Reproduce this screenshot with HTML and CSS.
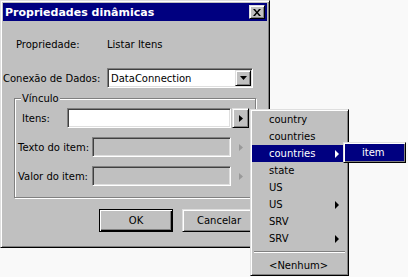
FILE: index.html
```html
<!DOCTYPE html>
<html lang="pt">
<head>
	<title>Propriedades dinâmicas</title>
	<meta charset="utf-8">
	<link rel="stylesheet" href="styles.css">
</head>
<body>
	<div class="window">
		<div class="titlebar">
			<span class="title">Propriedades dinâmicas</span>
			<button class="close">
				<svg width="8" height="7" viewBox="0 0 8 7"><path d="M0 0h2l2 2.5L6 0h2L5 3.5 8 7H6L4 4.5 2 7H0l3-3.5z" fill="#000"/></svg>
			</button>
		</div>

		<div class="row prop">
			<span class="label">Propriedade:</span>
			<span>Listar Itens</span>
		</div>

		<div class="row conn">
			<span class="label">Conexão de Dados:</span>
			<div class="select">
				<span>DataConnection</span>
				<span class="drop">
					<svg width="7" height="4" viewBox="0 0 7 4"><path d="M0 0h7L3.5 4z" fill="#000"/></svg>
				</span>
			</div>
		</div>

		<div class="group">
			<span class="legend">Vínculo</span>
			<div class="field items">
				<span class="label">Itens:</span>
				<div class="input"></div>
				<span class="more">
					<svg width="4" height="7" viewBox="0 0 4 7"><path d="M0 0v7l4-3.5z" fill="#000"/></svg>
				</span>
			</div>
			<div class="field">
				<span class="label">Texto do item:</span>
				<div class="input off"></div>
				<span class="more off">
					<svg width="4" height="7" viewBox="0 0 4 7"><path d="M0 0v7l4-3.5z" fill="#999"/></svg>
				</span>
			</div>
			<div class="field">
				<span class="label">Valor do item:</span>
				<div class="input off"></div>
				<span class="more off">
					<svg width="4" height="7" viewBox="0 0 4 7"><path d="M0 0v7l4-3.5z" fill="#999"/></svg>
				</span>
			</div>
		</div>

		<div class="actions">
			<button class="btn default">OK</button>
			<button class="btn">Cancelar</button>
		</div>
	</div>

	<div class="menu main-menu">
		<div class="item">country</div>
		<div class="item">countries</div>
		<div class="item active sub">countries</div>
		<div class="item">state</div>
		<div class="item">US</div>
		<div class="item sub">US</div>
		<div class="item">SRV</div>
		<div class="item sub">SRV</div>
		<div class="sep"></div>
		<div class="item">&lt;Nenhum&gt;</div>
	</div>

	<div class="menu sub-menu">
		<div class="item active">item</div>
	</div>
</body>
</html>
```

FILE: styles.css
```css
body {
	margin: 0;
	padding: 0;
	background: #f9f9f9;
	font-family: "DejaVu Sans", sans-serif;
	font-size: 10px;
	color: #000;
}
.window {
	box-sizing: border-box;
	width: 270px;
	height: 248px;
	padding: 2px;
	background: #c0c0c0;
	border: 1px solid;
	border-color: #dfdfdf #000 #000 #dfdfdf;
	box-shadow: inset 1px 1px #fff, inset -1px -1px #808080;
}
.titlebar {
	display: flex;
	align-items: center;
	justify-content: space-between;
	height: 18px;
	padding: 0 2px 0 2px;
	background: #000080;
	color: #fff;
	font-weight: bold;
	font-size: 11px;
}
.close {
	display: flex;
	align-items: center;
	justify-content: center;
	box-sizing: border-box;
	width: 16px;
	height: 14px;
	padding: 0;
	background: #c0c0c0;
	border: 1px solid;
	border-color: #dfdfdf #000 #000 #dfdfdf;
	box-shadow: inset 1px 1px #fff, inset -1px -1px #808080;
}
.row {
	display: grid;
	grid-template-columns: 104px 1fr;
	align-items: center;
	height: 20px;
}
.prop {
	margin-top: 13px;
}
.prop .label {
	padding-left: 13px;
}
.conn {
	margin-top: 14px;
}
.select {
	display: flex;
	align-items: center;
	justify-content: space-between;
	box-sizing: border-box;
	width: 146px;
	height: 20px;
	padding: 1px 1px 1px 3px;
	background: #fff;
	border: 1px solid;
	border-color: #808080 #fff #fff #808080;
	box-shadow: inset 1px 1px #404040, inset -1px -1px #dfdfdf;
}
.drop {
	display: flex;
	align-items: center;
	justify-content: center;
	box-sizing: border-box;
	width: 16px;
	height: 16px;
	background: #c0c0c0;
	border: 1px solid;
	border-color: #dfdfdf #000 #000 #dfdfdf;
	box-shadow: inset 1px 1px #fff, inset -1px -1px #808080;
}
.group {
	box-sizing: border-box;
	height: 100px;
	margin: 10px 11px 0 11px;
	border: 1px solid #808080;
	box-shadow: inset 1px 1px #fff, 1px 1px #fff;
}
.legend {
	display: block;
	width: fit-content;
	margin: -7px 0 0 6px;
	padding: 0 1px;
	line-height: 13px;
	background: #c0c0c0;
}
.field {
	display: flex;
	align-items: center;
	height: 20px;
	margin-top: 9px;
}
.field .label {
	box-sizing: border-box;
	width: 77px;
	padding-left: 3px;
}
.items {
	margin-top: 3px;
}
.items .label {
	width: 52px;
	padding-left: 7px;
}
.input {
	box-sizing: border-box;
	width: 164px;
	height: 20px;
	background: #fff;
	border: 1px solid;
	border-color: #808080 #fff #fff #808080;
	box-shadow: inset 1px 1px #404040, inset -1px -1px #dfdfdf;
}
.field .input.off {
	width: 139px;
	background: #c0c0c0;
}
.more {
	display: flex;
	align-items: center;
	justify-content: center;
	box-sizing: border-box;
	width: 17px;
	height: 20px;
	margin-left: 1px;
	background: #c0c0c0;
	border: 1px solid;
	border-color: #dfdfdf #000 #000 #dfdfdf;
	box-shadow: inset 1px 1px #fff, inset -1px -1px #808080;
}
.more.off {
	border-color: transparent;
	box-shadow: none;
}
.actions {
	display: flex;
	gap: 9px;
	margin-top: 11px;
	padding-left: 96px;
}
.btn {
	box-sizing: border-box;
	width: 74px;
	height: 23px;
	padding: 0;
	font: inherit;
	color: #000;
	background: #c0c0c0;
	border: 1px solid;
	border-color: #dfdfdf #000 #000 #dfdfdf;
	box-shadow: inset 1px 1px #fff, inset -1px -1px #808080;
}
.btn.default {
	border-color: #000;
	box-shadow: inset 1px 1px #fff, inset -1px -1px #000, inset -2px -2px #808080;
}
.menu {
	position: absolute;
	box-sizing: border-box;
	padding: 1px;
	background: #c0c0c0;
	border: 1px solid;
	border-color: #dfdfdf #000 #000 #dfdfdf;
	box-shadow: inset 1px 1px #fff, inset -1px -1px #808080;
}
.main-menu {
	left: 250px;
	top: 109px;
	width: 99px;
}
.sub-menu {
	left: 343px;
	top: 142px;
	width: 63px;
}
.item {
	position: relative;
	height: 17px;
	line-height: 17px;
	padding-left: 17px;
	white-space: nowrap;
}
.item.active {
	background: #000080;
	color: #fff;
}
.item.sub::after {
	content: "";
	position: absolute;
	right: 8px;
	top: 5px;
	border-left: 4px solid currentColor;
	border-top: 4px solid transparent;
	border-bottom: 4px solid transparent;
}
.sep {
	height: 0;
	margin: 4px 2px;
	border-top: 1px solid #808080;
	border-bottom: 1px solid #fff;
}
```
